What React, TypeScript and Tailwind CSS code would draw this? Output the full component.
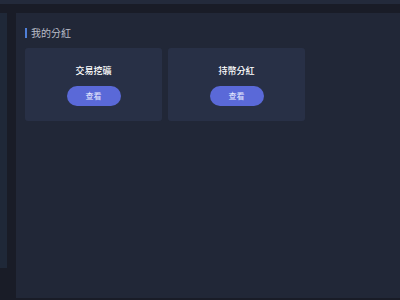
export default function App() {
  const cards = ["交易挖礦", "持幣分紅"];
  return (
    <div
      className="w-[400px] h-[300px] bg-[#191c27] flex flex-col overflow-hidden"
      style={{ fontFamily: '"Noto Sans CJK TC", "Noto Sans", sans-serif' }}
    >
      <div className="h-[4px] bg-[#232a3b] shrink-0" />
      <div className="h-[9px] bg-[#191c27] shrink-0" />
      <div className="flex flex-1 min-h-0">
        <div className="w-[16px] shrink-0 flex">
          <div className="w-[7px] h-[255px] bg-[#1f2838]" />
        </div>
        <main className="flex-1 h-[285px] bg-[#212737] pl-[9px] pt-[14px]">
          <div className="flex items-center gap-[4px] h-[12px]">
            <span className="w-[2px] h-[10px] bg-[#4f7fd8]" />
            <span className="text-[10px] leading-none text-[#b9bdc7]">我的分紅</span>
          </div>
          <div className="flex gap-[6px] mt-[9px]">
            {cards.map((c) => (
              <div
                key={c}
                className="w-[137px] h-[73px] bg-[#283046] rounded-[3px] flex flex-col items-center pt-[18px]"
              >
                <div className="text-[9px] leading-none font-medium text-white">{c}</div>
                <button className="mt-[11px] w-[54px] h-[20px] rounded-full bg-[#5a69d8] text-[8px] text-[#e6e9ff] leading-none">
                  查看
                </button>
              </div>
            ))}
          </div>
        </main>
      </div>
    </div>
  );
}
